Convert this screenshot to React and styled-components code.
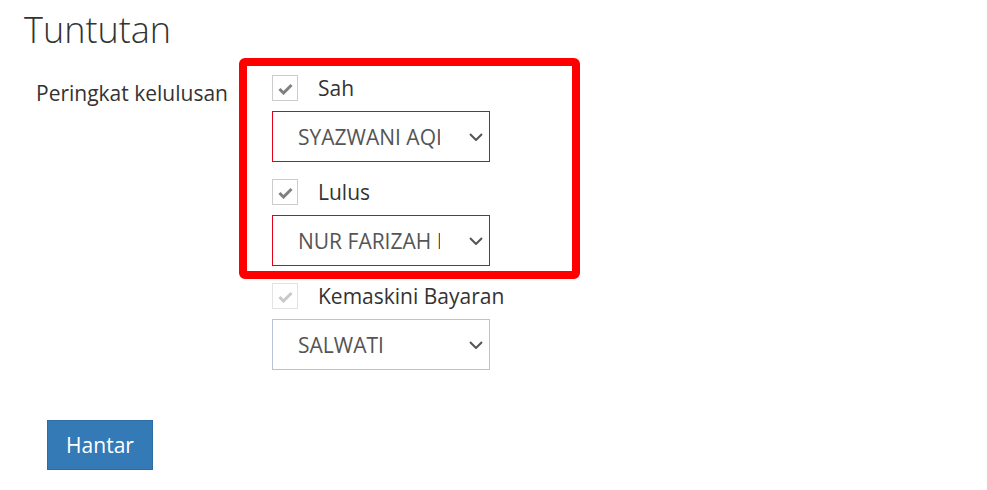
import React, { useState } from "react";
import styled, { createGlobalStyle } from "styled-components";

const GlobalStyle = createGlobalStyle`
  body {
    margin: 0;
    background: #fff;
    font-family: "Open Sans", "Liberation Sans", sans-serif;
    color: #333;
  }
`;

const people = ["SYAZWANI AQILAH BINTI AHMAD", "NUR FARIZAH BINTI OMAR", "SALWATI"];

const groups = [
  { label: "Sah", value: people[0], tone: "error" },
  { label: "Lulus", value: people[1], tone: "error" },
  { label: "Kemaskini Bayaran", value: people[2], tone: "normal", disabled: true },
];

const CheckIcon = ({ color }) => (
  <svg width="15" height="12" viewBox="0 0 15 12">
    <polyline
      points="1.5,6 5.5,10 13.5,2"
      fill="none"
      stroke={color}
      strokeWidth="3"
      strokeLinejoin="miter"
    />
  </svg>
);

const Chevron = () => (
  <svg width="14" height="8" viewBox="0 0 14 8">
    <polyline points="1,1 7,7 13,1" fill="none" stroke="#555" strokeWidth="2" />
  </svg>
);

const App = () => {
  const [values, setValues] = useState(groups.map((g) => g.value));

  return (
    <SPage>
      <GlobalStyle />
      <STitle>Tuntutan</STitle>
      <SForm onSubmit={(e) => e.preventDefault()}>
        <SLabel>Peringkat kelulusan</SLabel>
        <SControls>
          <SHighlight />
          {groups.map((g, i) => (
            <SGroup key={g.label}>
              <SCheckRow>
                <SCheckBox $disabled={g.disabled}>
                  <CheckIcon color={g.disabled ? "#c9c9c9" : "#808080"} />
                </SCheckBox>
                <SCheckText>{g.label}</SCheckText>
              </SCheckRow>
              <SSelectWrap>
                <SSelect
                  $tone={g.tone}
                  value={values[i]}
                  onChange={(e) => {
                    const next = [...values];
                    next[i] = e.target.value;
                    setValues(next);
                  }}
                >
                  {people.map((o) => (
                    <option key={o}>{o}</option>
                  ))}
                </SSelect>
                <SChevron>
                  <Chevron />
                </SChevron>
              </SSelectWrap>
            </SGroup>
          ))}
        </SControls>
      </SForm>
      <SButton type="submit">Hantar</SButton>
    </SPage>
  );
};

export default App;

const SPage = styled.div`
  padding: 8px 24px 20px;
`;

const STitle = styled.h2`
  margin: 0;
  font-size: 36px;
  line-height: 44px;
  font-weight: 300;
  color: #333;
`;

const SForm = styled.form`
  display: flex;
  margin-top: 23px;
`;

const SLabel = styled.label`
  width: 236px;
  padding: 5px 0 0 12px;
  font-size: 21px;
  line-height: 26px;
  color: #333;
`;

const SControls = styled.div`
  position: relative;
  display: flex;
  flex-direction: column;
  gap: 17px;
`;

const SHighlight = styled.div`
  position: absolute;
  left: -33px;
  top: -17px;
  width: 341px;
  height: 221px;
  box-sizing: border-box;
  border: 8px solid #ff0000;
  border-radius: 6px;
  pointer-events: none;
`;

const SGroup = styled.div`
  display: flex;
  flex-direction: column;
  gap: 10px;
`;

const SCheckRow = styled.div`
  display: flex;
  align-items: center;
  height: 26px;
`;

const SCheckBox = styled.span`
  width: 26px;
  height: 26px;
  box-sizing: border-box;
  border: 1px solid ${(p) => (p.$disabled ? "#e3e3e3" : "#cccccc")};
  display: flex;
  align-items: center;
  justify-content: center;
  padding-top: 1px;
`;

const SCheckText = styled.span`
  margin-left: 20px;
  font-size: 21px;
  line-height: 26px;
  color: #333;
`;

const SSelectWrap = styled.div`
  position: relative;
  width: 218px;
  height: 51px;
`;

const SSelect = styled.select`
  appearance: none;
  width: 100%;
  height: 100%;
  box-sizing: border-box;
  padding: 0 49px 0 25px;
  border: 1px solid ${(p) => (p.$tone === "error" ? "#e2001a" : "#b8c4d6")};
  border-radius: 0;
  background: #fff;
  font-family: "Open Sans", "Liberation Sans", sans-serif;
  font-size: 21px;
  color: #555;
  outline: none;
`;

const SChevron = styled.span`
  position: absolute;
  right: 7px;
  top: 22px;
  display: flex;
  pointer-events: none;
`;

const SButton = styled.button`
  margin: 50px 0 0 23px;
  width: 106px;
  height: 50px;
  padding: 0;
  border: 1px solid #2e6da4;
  border-radius: 0;
  background: #337ab7;
  color: #fff;
  font-family: "Open Sans", "Liberation Sans", sans-serif;
  font-size: 21px;
  cursor: pointer;
`;
